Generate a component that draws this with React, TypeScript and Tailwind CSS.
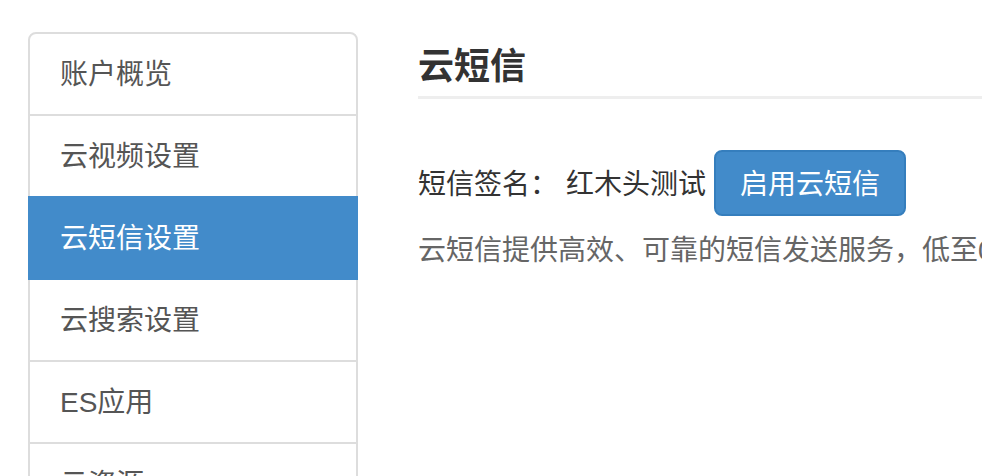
import React from 'react'

const MENU = ['账户概览', '云视频设置', '云短信设置', '云搜索设置', 'ES应用', '云资源']

export default function App() {
  const active = 2

  return (
    <div
      className="flex h-[476px] w-[982px] overflow-hidden bg-white pt-8 pl-7 text-[28px] text-[#333]"
      style={{ fontFamily: '"Helvetica Neue", "Liberation Sans", "Noto Sans CJK SC", sans-serif' }}
    >
      {/* Sidebar */}
      <div className="w-[330px] shrink-0">
        {MENU.map((item, i) => (
          <div
            key={item}
            className={`relative -mb-[2px] border-2 px-[30px] pt-[21px] pb-[19px] leading-[40px] ${
              i === 0 ? 'rounded-t-lg' : ''
            } ${
              i === active
                ? 'z-10 border-[#428bca] bg-[#428bca] text-white'
                : 'border-[#ddd] bg-white text-[#555]'
            }`}
          >
            {item}
          </div>
        ))}
      </div>

      {/* Content */}
      <div className="ml-[60px] min-w-0 flex-1">
        <div className="mt-3 border-b-[3px] border-[#eee] pb-2">
          <h3 className="pt-[1px] text-[36px] font-bold leading-[43px] text-[#333]">云短信</h3>
        </div>

        <div className="mt-[51px] flex h-[66px] items-center whitespace-nowrap pt-[3px]">
          <span>短信签名：</span>
          <span className="ml-2">红木头测试</span>
          <button className="-mt-[3px] ml-2 h-[66px] rounded-lg border-2 border-[#357ebd] bg-[#428bca] px-6 pt-[3px] leading-[40px] text-white">
            启用云短信
          </button>
        </div>

        <p className="mt-[15px] whitespace-nowrap leading-[40px] text-[#666]">
          云短信提供高效、可靠的短信发送服务，低至0.04元/条，3秒可达。
        </p>
      </div>
    </div>
  )
}
